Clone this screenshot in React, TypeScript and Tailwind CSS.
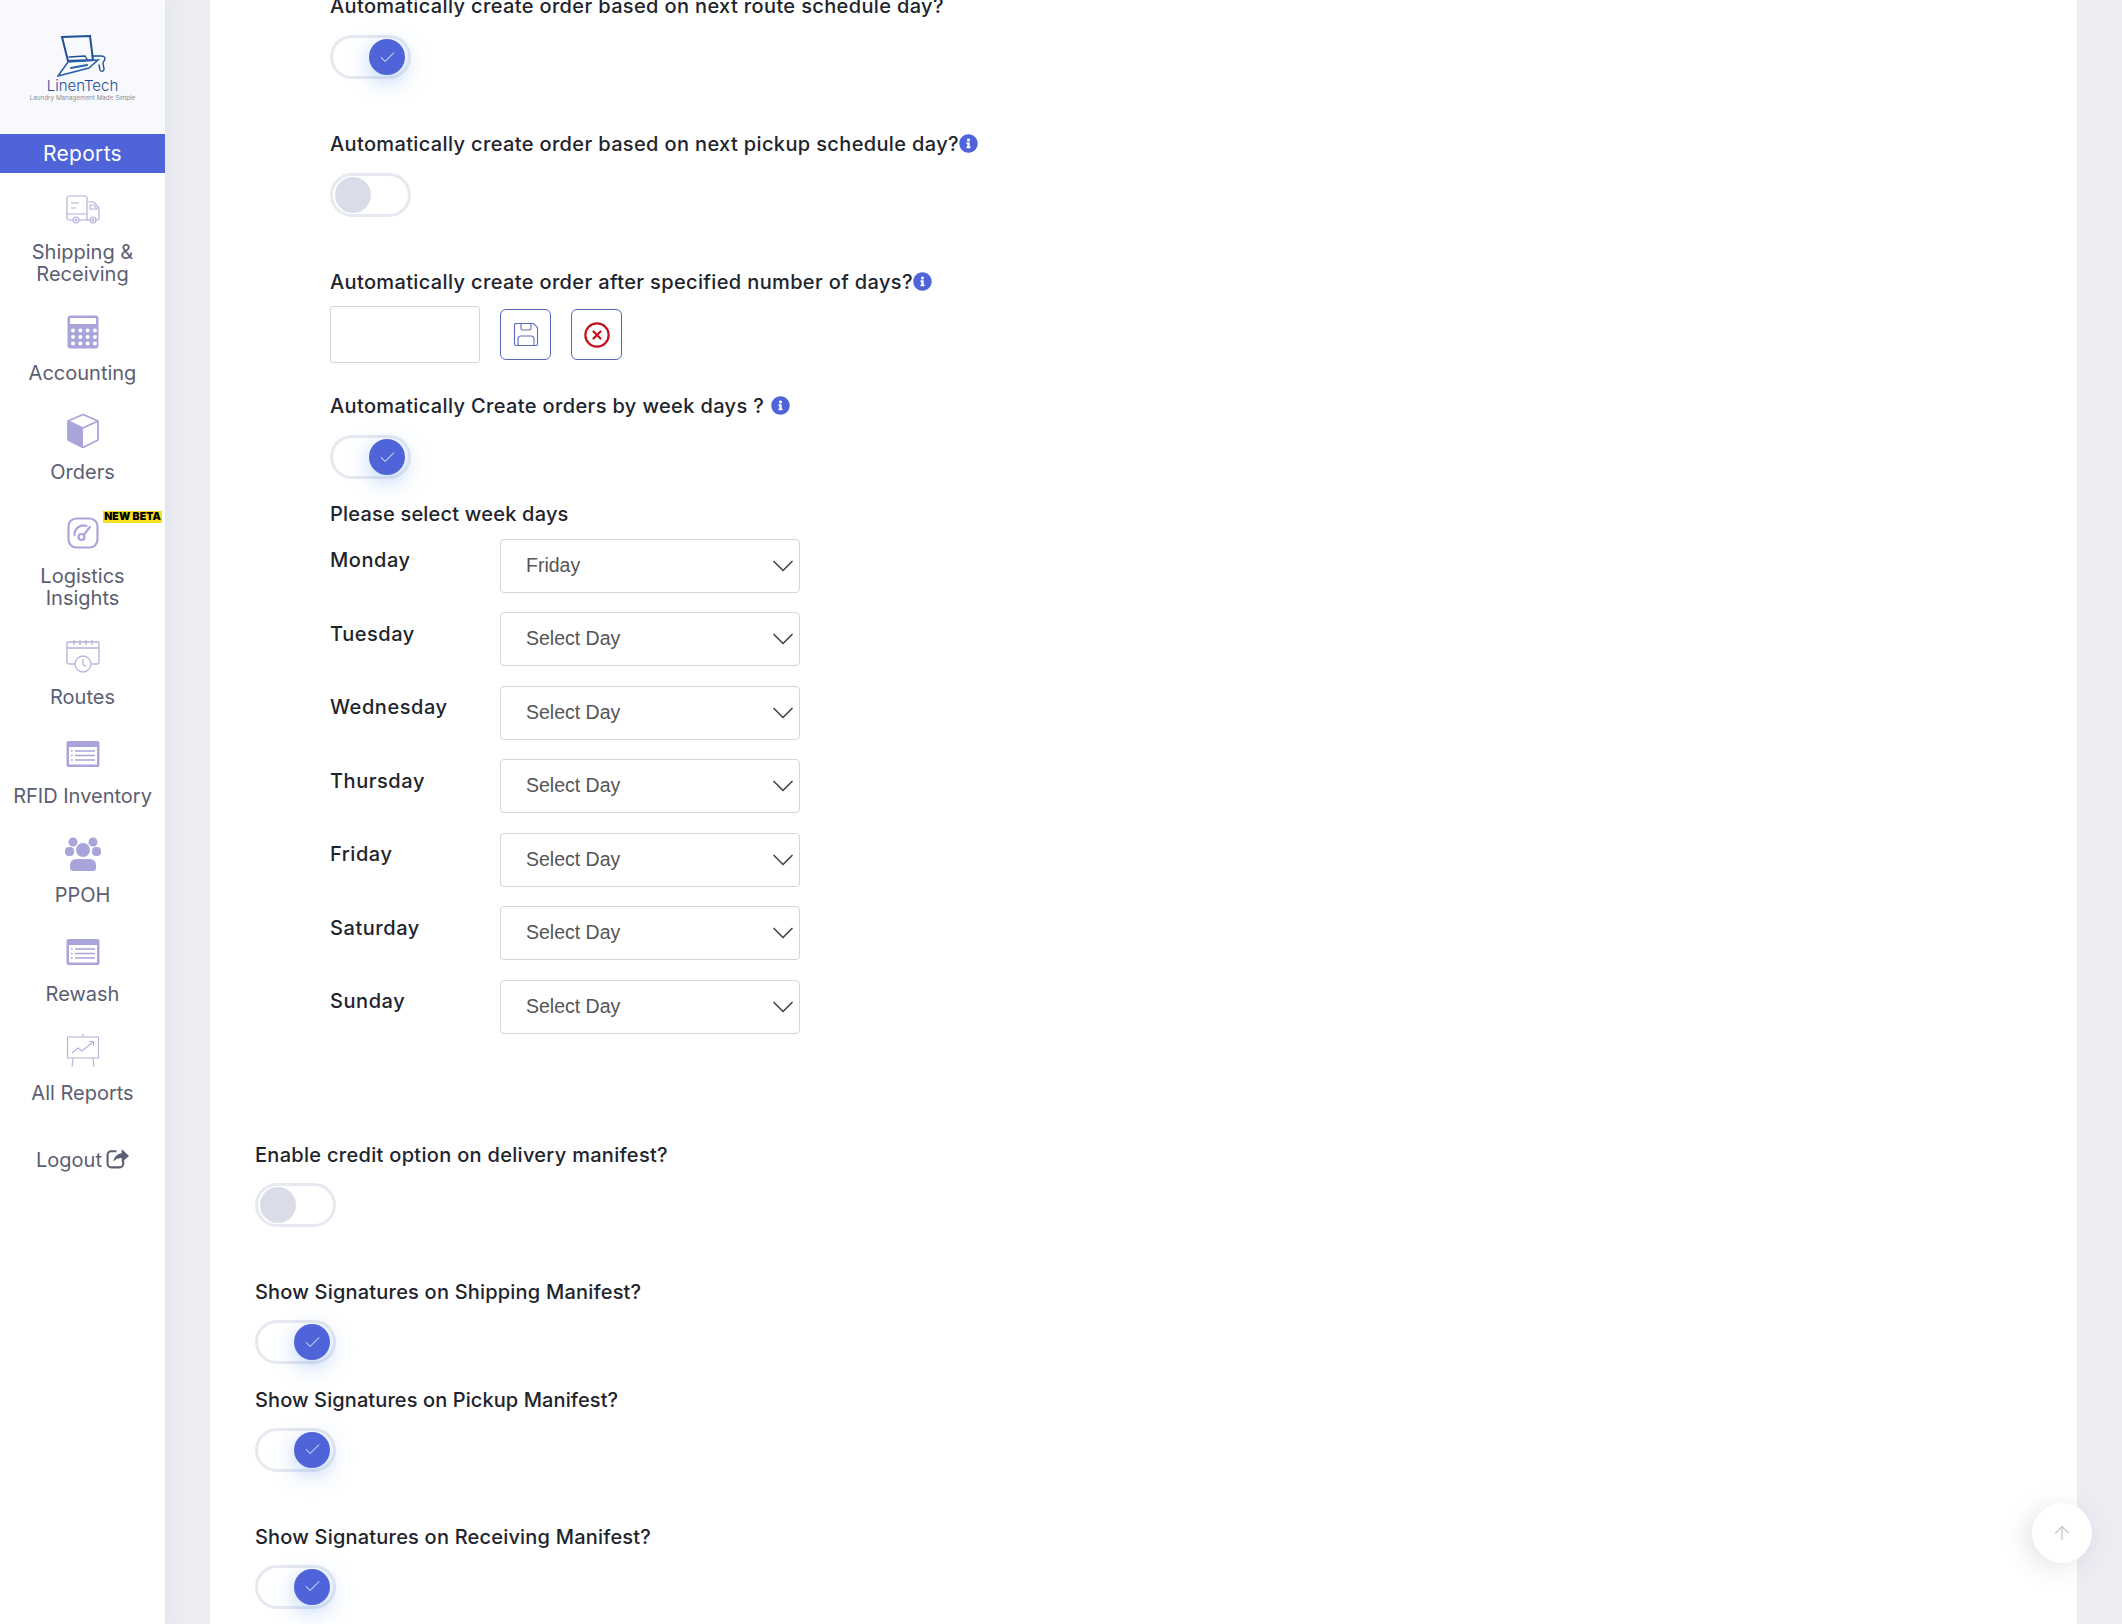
import { Check, ChevronDown, CircleX, ArrowUp } from "lucide-react";
import { FaInfoCircle } from "react-icons/fa";

const iconStroke = "#b4b2d8";
const iconFill = "#a9a5da";

function TruckIcon() {
  return (
    <svg width="36" height="30" viewBox="0 0 36 30" fill="none" stroke={iconStroke} strokeWidth="1.2" className="mb-[4px]">
      <path d="M8 26H4a2 2 0 0 1-2-2V4a2 2 0 0 1 2-2h16a2 2 0 0 1 2 2v22H14" />
      <path d="M22 8h7l5 6v10a2 2 0 0 1-2 2h-1M25 26h-3M2 20h20M6 9h8M6 14h5M25 11h4l3 4h-7z" />
      <circle cx="11" cy="26" r="3" />
      <circle cx="28" cy="26" r="3" />
      <circle cx="11" cy="26" r="0.8" />
      <circle cx="28" cy="26" r="0.8" />
    </svg>
  );
}

function CalcIcon() {
  const dots = [];
  for (let r = 0; r < 3; r++) {
    for (let c = 0; c < 4; c++) {
      dots.push(<circle key={`${r}-${c}`} cx={6 + c * 7.3} cy={15.5 + r * 6.5} r="2" fill="#fff" />);
    }
  }
  return (
    <svg width="32" height="34" viewBox="0 0 32 34">
      <rect x="0.5" y="0.5" width="31" height="33" rx="3" fill={iconFill} />
      <rect x="3" y="3" width="26" height="6" rx="0.5" fill="#fff" />
      {dots}
    </svg>
  );
}

function CubeIcon() {
  return (
    <svg width="32" height="34" viewBox="0 0 32 34">
      <path d="M16 .5 31 7v19l-15 7.5L1 26V7z" fill="#fff" />
      <path d="M1 7l15 7v19.500L1 26z" fill={iconFill} />
      <path d="M16 .5 31 7v19l-15 7.500L1 26V7zM1 7l15 7 15-7" fill="none" stroke={iconFill} strokeWidth="1.8" strokeLinejoin="round" />
    </svg>
  );
}

function GaugeIcon() {
  return (
    <svg width="32" height="32" viewBox="0 0 32 32" fill="none" stroke={iconFill} strokeWidth="2.2" strokeLinecap="round" className="mb-[4px]">
      <rect x="1.5" y="1.5" width="29" height="29" rx="8" />
      <path d="M7.5 18a9 9 0 0 1 12-9" />
      <circle cx="14.5" cy="20" r="3" />
      <path d="M17 17.5l6-7.5" />
    </svg>
  );
}

function CalendarIcon() {
  return (
    <svg width="34" height="34" viewBox="0 0 34 34" fill="none" stroke={iconStroke} strokeWidth="1.3">
      <path d="M9 25H3a2 2 0 0 1-2-2V4a1 1 0 0 1 1-1h30a1 1 0 0 1 1 1v19a2 2 0 0 1-2 2h-5" />
      <path d="M1 9h32M8 1v5M14 1v5M20 1v5M26 1v5" />
      <circle cx="17" cy="25" r="8" fill="#fff" />
      <path d="M17 20v5.5l3 2" />
    </svg>
  );
}

function ListIcon() {
  return (
    <svg width="34" height="26" viewBox="0 0 34 26" className="mb-[2px]">
      <rect x="0.5" width="33" height="26" rx="2" fill={iconFill} />
      <rect x="3" y="6" width="28" height="17.5" fill="#fff" />
      <path d="M9 10h20M9 14.5h20M9 19h20M5 10h1.6M5 14.5h1.6M5 19h1.6" stroke={iconFill} strokeWidth="1.6" />
    </svg>
  );
}

function UsersIcon() {
  return (
    <svg width="36" height="34" viewBox="0 0 36 34" fill={iconFill}>
      <circle cx="8" cy="5" r="4.5" />
      <circle cx="28" cy="5" r="4.5" />
      <rect y="10" width="9" height="9" rx="4" />
      <rect x="27" y="10" width="9" height="9" rx="4" />
      <path d="M5 28a6 6 0 0 1 6-6h14a6 6 0 0 1 6 6v3a3 3 0 0 1-3 3H8a3 3 0 0 1-3-3z" />
      <circle cx="18" cy="13" r="7.5" stroke="#fff" strokeWidth="1" />
    </svg>
  );
}

function BoardIcon() {
  return (
    <svg width="34" height="34" viewBox="0 0 34 34" fill="none" stroke={iconStroke} strokeWidth="1.1" className="mb-[2px]">
      <path d="M1.5 3h31v21h-31zM17 0v3M7 24.5 6 33M27 24.5 28 33" />
      <path d="M6 19l6-5 4 3 11-9M23 7.5h4.5V12" />
    </svg>
  );
}

function Toggle({ on }: { on: boolean }) {
  return (
    <div
      className={`flex h-[44px] w-[81px] items-center rounded-full border-[3px] border-[#e7e9f0] bg-white ${
        on ? "justify-end pr-[3px]" : "justify-start pl-[2px]"
      }`}
    >
      {on ? (
        <div className="flex h-[36px] w-[36px] items-center justify-center rounded-full bg-[#5064d9] text-white shadow-[0_6px_22px_rgba(70,140,240,0.38)]">
          <Check size={19} strokeWidth={1.2} />
        </div>
      ) : (
        <div className="h-[36px] w-[36px] rounded-full bg-[#dadde8]" />
      )}
    </div>
  );
}

function InfoDot({ className }: { className: string }) {
  return <FaInfoCircle size={19} className={`inline-block align-[-2px] text-[#5064d9] ${className}`} />;
}

function Label({ children, className }: { children: React.ReactNode; className?: string }) {
  return <div className={`h-[30px] text-[20px] leading-[30px] font-[450] text-[#22242c] ${className ?? "tracking-[0.36px]"}`}>{children}</div>;
}

function SideItem({ icon, lines, badge, className }: { icon: React.ReactNode; lines: string[]; badge?: boolean; className?: string }) {
  return (
    <div className={`relative flex flex-col items-center pb-[29px] ${className ?? ""}`}>
      <div className="flex h-[36px] items-center justify-center">{icon}</div>
      <div className="mt-[12px] whitespace-nowrap text-center text-[20px] leading-[22px] text-[#5b5e73]">
        {lines.map((l) => (
          <div key={l}>{l}</div>
        ))}
      </div>
      {badge && (
        <span className="absolute right-[3px] top-[-6px] bg-[#f7dd1e] px-[1px] text-[10.5px] leading-[12px] font-black whitespace-nowrap tracking-[0.1px] text-black">
          NEW BETA
        </span>
      )}
    </div>
  );
}

const days = ["Monday", "Tuesday", "Wednesday", "Thursday", "Friday", "Saturday", "Sunday"];

export default function App() {
  return (
    <div className="relative flex h-screen overflow-hidden bg-[#ecedf3] font-['Inter',sans-serif]">
      <aside className="w-[165px] shrink-0 bg-white shadow-[4px_0_18px_rgba(90,95,130,0.06)]">
        <div className="flex h-[134px] flex-col items-center bg-[#f8f9fc] pt-[35px]">
          <svg width="52" height="42" viewBox="0 0 52 42" fill="none" strokeLinecap="round">
            <path d="M5 2 33 1l3 24-25 1z" stroke="#1e4f96" strokeWidth="2" />
            <path d="M12 22l16-1 2 3" stroke="#1e4f96" strokeWidth="1.3" />
            <path d="M1 41 11 27l30-2-9 8z" stroke="#2762ab" strokeWidth="1.6" />
            <path d="M14 33l16-3" stroke="#2762ab" strokeWidth="2" />
            <path d="M35 21h9c4 0 5 2 3 5l-1 2 1 6c0 3-3 3-4 1l-1-5" stroke="#1e4f96" strokeWidth="1.4" />
          </svg>
          <div className="mt-[1px] text-[15px] leading-[16px] font-light text-[#1c4f9b]">LinenTech</div>
          <div className="text-[6.3px] leading-[8px] whitespace-nowrap text-[#8b8e9b]">Laundry Management Made Simple</div>
        </div>
        <div className="flex h-[39px] items-center justify-center bg-[#5064d9] text-[21px] tracking-[0.3px] text-white">Reports</div>
        <nav className="pt-[20px]">
          <SideItem icon={<TruckIcon />} lines={["Shipping &", "Receiving"]} />
          <SideItem icon={<CalcIcon />} lines={["Accounting"]} />
          <SideItem icon={<CubeIcon />} lines={["Orders"]} />
          <SideItem icon={<GaugeIcon />} lines={["Logistics", "Insights"]} badge className="mt-[5px]" />
          <SideItem icon={<CalendarIcon />} lines={["Routes"]} />
          <SideItem icon={<ListIcon />} lines={["RFID Inventory"]} />
          <SideItem icon={<UsersIcon />} lines={["PPOH"]} />
          <SideItem icon={<ListIcon />} lines={["Rewash"]} />
          <SideItem icon={<BoardIcon />} lines={["All Reports"]} />
          <div className="mt-[14px] flex items-center justify-center gap-[4px] text-[20px] leading-[22px] text-[#5b5e73]">
            Logout
            <svg width="23" height="22" viewBox="0 0 22 21" fill="none" className="mb-[4px]">
              <path d="M10 4H5a3.5 3.5 0 0 0-3.500 3.500V16A3.500 3.500 0 0 0 5 19.500h8a3.500 3.500 0 0 0 3.500-3.500v-3" stroke="#5b5e73" strokeWidth="2" />
              <path d="M7 14c1-5 4-7.500 8-8V2l7 6.500-7 6V10.500c-3 0-6 1-8 3.500z" fill="#5b5e73" />
            </svg>
          </div>
        </nav>
      </aside>

      <main className="ml-[45px] w-[1867px] shrink-0 overflow-hidden bg-white">
        <div className="mt-[-9px] pl-[120px]">
          <Label>Automatically create order based on next route schedule day?</Label>
          <div className="mt-[14px]"><Toggle on /></div>

          <Label className="mt-[50px] tracking-[0.36px]">
            Automatically create order based on next pickup schedule day?<InfoDot className="" />
          </Label>
          <div className="mt-[13.5px]"><Toggle on={false} /></div>

          <Label className="mt-[50px] tracking-[0.36px]">
            Automatically create order after specified number of days?<InfoDot className="" />
          </Label>
          <div className="mt-[9.5px] flex items-center">
            <input className="h-[57px] w-[150px] rounded-[3px] border border-[#d4d5d9] bg-white" />
            <button className="ml-[20px] flex h-[51px] w-[51px] items-center justify-center rounded-[6px] border border-[#5667ba] bg-white">
              <svg width="26" height="26" viewBox="0 0 26 26" fill="none" stroke="#5c6cb8" strokeWidth="1.1">
                <path d="M2.500 1.500h18l4 4V22a1.500 1.500 0 0 1-1.500 1.500H3A1.500 1.500 0 0 1 1.500 22V2.500z" />
                <path d="M8 1.500v5a1.500 1.500 0 0 0 1.500 1.500h7A1.500 1.500 0 0 0 18 6.500v-5M5 23.500V17a3 3 0 0 1 3-3h10a3 3 0 0 1 3 3v6.500" />
              </svg>
            </button>
            <button className="ml-[20px] flex h-[51px] w-[51px] items-center justify-center rounded-[6px] border border-[#5667ba] bg-white">
              <CircleX size={28} strokeWidth={1.9} className="text-[#c5101f]" />
            </button>
          </div>

          <Label className="mt-[28px] tracking-[0.36px]">
            Automatically Create orders by week days ? <InfoDot className="ml-[1px]" />
          </Label>
          <div className="mt-[14px]"><Toggle on /></div>

          <Label className="mt-[20px] tracking-[0.2px]">Please select week days</Label>
          <div className="mt-[9.5px] flex flex-col gap-[19.5px]">
            {days.map((d, i) => (
              <div key={d} className="flex items-start">
                <div className="w-[170px] pt-[6.500px] text-[20px] leading-[30px] font-[450] tracking-[0.55px] text-[#22242c]">{d}</div>
                <div className="relative h-[54px] w-[300px]">
                  <select
                    defaultValue={i === 0 ? "Friday" : "Select Day"}
                    className="h-full w-full appearance-none rounded-[4px] border border-[#d4d5d9] bg-white pl-[25px] font-['Liberation_Sans',sans-serif] text-[19.5px] text-[#555]"
                  >
                    <option>Select Day</option>
                    <option>Friday</option>
                  </select>
                  <ChevronDown size={36} strokeWidth={1.1} className="absolute right-[-1px] top-[9px] text-[#44464c]" />
                </div>
              </div>
            ))}
          </div>
        </div>

        <div className="pl-[45px]">
          <Label className="mt-[106px] tracking-[0.3px]">Enable credit option on delivery manifest?</Label>
          <div className="mt-[13px]"><Toggle on={false} /></div>

          <Label className="mt-[50px] tracking-[0.2px]">Show Signatures on Shipping Manifest?</Label>
          <div className="mt-[13.5px]"><Toggle on /></div>

          <Label className="mt-[20.5px] tracking-[0.1px]">Show Signatures on Pickup Manifest?</Label>
          <div className="mt-[13px]"><Toggle on /></div>

          <Label className="mt-[50px] tracking-[0.2px]">Show Signatures on Receiving Manifest?</Label>
          <div className="mt-[13px]"><Toggle on /></div>
        </div>
      </main>

      <button className="absolute left-[2032px] top-[1503px] flex h-[60px] w-[60px] items-center justify-center rounded-full bg-white text-[#c4c5cb] shadow-[-6px_4px_24px_rgba(70,70,90,0.14)]">
        <ArrowUp size={22} strokeWidth={1.3} />
      </button>
    </div>
  );
}
